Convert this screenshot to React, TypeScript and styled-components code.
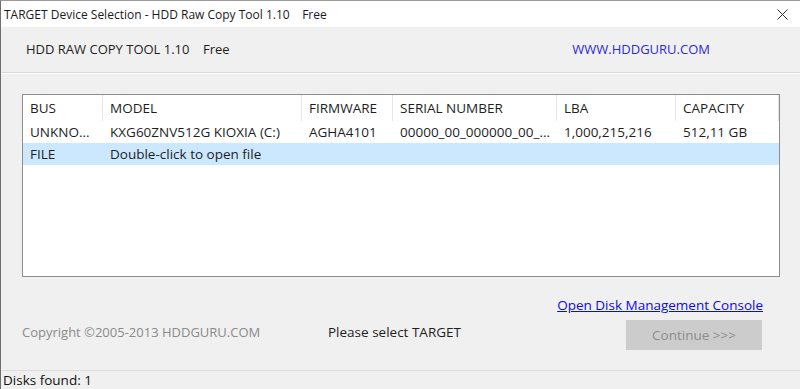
import React from 'react';
import styled, { createGlobalStyle } from 'styled-components';

const GlobalStyle = createGlobalStyle`
  html, body {
    margin: 0;
    padding: 0;
    background: #f0f0f0;
  }

  body {
    font-family: "Open Sans", "Noto Sans", sans-serif;
  }
`;

const Window = styled.div`
  width: 800px;
  height: 389px;
  box-sizing: border-box;
  display: flex;
  flex-direction: column;
  background: #f0f0f0;
  border-left: 1px solid #6e6e6e;
  border-top: 1px solid #9a9a9a;
  overflow: hidden;
  color: #1e1e1e;
`;

const TitleBar = styled.div`
  height: 26px;
  flex: none;
  display: flex;
  align-items: center;
  justify-content: space-between;
  background: #ffffff;
  padding: 0 12px 0 3px;
`;

const TitleText = styled.span`
  font-size: 12px;
  color: #1a1a1a;
  white-space: pre;
`;

const CloseIcon = styled.svg`
  width: 11px;
  height: 11px;
  margin-top: 1px;
`;

const Header = styled.div`
  height: 45px;
  flex: none;
  display: flex;
  align-items: center;
  justify-content: space-between;
  padding: 0 90px 0 25px;
  border-bottom: 1px solid #d9d9d9;
  box-shadow: 0 1px 0 #ffffff;
`;

const HeaderTitle = styled.span`
  font-size: 13px;
  color: #1e1e1e;
  white-space: pre;
  margin-top: -2px;
`;

const HeaderLink = styled.a`
  font-size: 13px;
  color: #2b2bd8;
  text-decoration: none;
  margin-top: -2px;
`;

const Content = styled.div`
  flex: 1;
  display: flex;
  flex-direction: column;
  padding: 21px 20px 0 21px;
`;

const ListView = styled.div`
  height: 183px;
  box-sizing: border-box;
  border: 1px solid #8d8d8d;
  background: #ffffff;
`;

const columns = '80px 199px 91px 164px 119px 103px';

const HeaderRow = styled.div`
  display: grid;
  grid-template-columns: ${columns};
  height: 26px;
`;

const HeaderCell = styled.div`
  display: flex;
  align-items: center;
  padding-left: 7px;
  font-size: 13.5px;
  color: #1e1e1e;
  border-right: 1px solid #e5e5e5;
  white-space: nowrap;
  overflow: hidden;
`;

const Row = styled.div<{ $selected?: boolean }>`
  display: grid;
  grid-template-columns: ${columns};
  height: 22px;
  background: ${(p) => (p.$selected ? '#cce8ff' : 'transparent')};
`;

const Cell = styled.div`
  display: flex;
  align-items: center;
  padding-left: 7px;
  font-size: 13.5px;
  color: #1e1e1e;
  white-space: nowrap;
  overflow: hidden;
`;

const Footer = styled.div`
  display: grid;
  grid-template-columns: 306px 1fr 136px;
  grid-template-rows: 22px 30px;
  row-gap: 4px;
  margin-top: 17px;
  padding-right: 18px;
`;

const ConsoleLink = styled.a`
  grid-column: 2 / 4;
  justify-self: end;
  align-self: center;
  font-size: 13.5px;
  color: #0b0be0;
  text-decoration: underline;
  margin-right: -1px;
`;

const FooterText = styled.span<{ $muted?: boolean }>`
  align-self: start;
  line-height: 24px;
  font-size: ${(p) => (p.$muted ? '13px' : '13.5px')};
  color: ${(p) => (p.$muted ? '#8a8a8a' : '#1e1e1e')};
`;

const ContinueButton = styled.button`
  height: 30px;
  width: 136px;
  border: none;
  background: #cccccc;
  color: #8c8c8c;
  font-family: inherit;
  font-size: 13.5px;
  padding: 0;
`;

const StatusBar = styled.div`
  height: 18px;
  flex: none;
  display: flex;
  align-items: center;
  padding-left: 2px;
  border-top: 1px solid #dcdcdc;
  font-size: 13.5px;
  color: #111;
`;

const headers = ['BUS', 'MODEL', 'FIRMWARE', 'SERIAL NUMBER', 'LBA', 'CAPACITY'];

const rows = [
  ['UNKNO...', 'KXG60ZNV512G KIOXIA (C:)', 'AGHA4101', '00000_00_000000_00_...', '1,000,215,216', '512,11 GB'],
  ['FILE', 'Double-click to open file', '', '', '', ''],
];

const App: React.FC = () => {
  return (
    <Window>
      <GlobalStyle />
      <TitleBar>
        <TitleText>TARGET Device Selection - HDD Raw Copy Tool 1.10    Free</TitleText>
        <CloseIcon viewBox="0 0 11 11">
          <path d="M0.5 0.5 L10.5 10.5 M10.5 0.5 L0.5 10.5" stroke="#333" strokeWidth="1" fill="none" />
        </CloseIcon>
      </TitleBar>

      <Header>
        <HeaderTitle>HDD RAW COPY TOOL 1.10    Free</HeaderTitle>
        <HeaderLink href="#">WWW.HDDGURU.COM</HeaderLink>
      </Header>

      <Content>
        <ListView>
          <HeaderRow>
            {headers.map((h) => (
              <HeaderCell key={h}>{h}</HeaderCell>
            ))}
          </HeaderRow>
          {rows.map((r, i) => (
            <Row key={i} $selected={i === 1}>
              {r.map((c, j) => (
                <Cell key={j}>{c}</Cell>
              ))}
            </Row>
          ))}
        </ListView>

        <Footer>
          <ConsoleLink href="#">Open Disk Management Console</ConsoleLink>
          <FooterText $muted>Copyright ©2005-2013 HDDGURU.COM</FooterText>
          <FooterText>Please select TARGET</FooterText>
          <ContinueButton disabled>Continue &gt;&gt;&gt;</ContinueButton>
        </Footer>
      </Content>

      <StatusBar>Disks found: 1</StatusBar>
    </Window>
  );
};

export default App;
